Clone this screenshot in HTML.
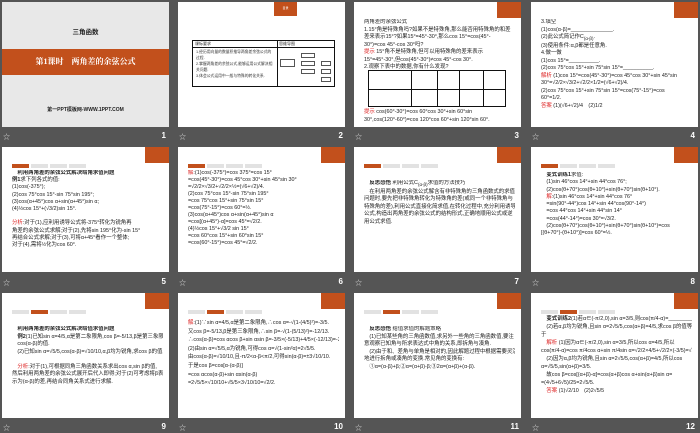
<!DOCTYPE html>
<html><head><meta charset="utf-8"><style>
*{margin:0;padding:0;box-sizing:border-box}
body{width:700px;height:431px;background:#555;position:relative;overflow:hidden;font-family:"Liberation Sans","Noto Sans CJK SC",sans-serif}
.s{position:absolute;width:167px;height:125px;background:#fff;overflow:hidden}
.tag{position:absolute;right:0;top:0;width:24px;height:16px;background:#c2501c;color:#fff;font-size:3px;line-height:4px;text-align:center;padding-top:4px}
.tabs{position:absolute;left:10px;top:17px;height:4px;width:80px}
.tabs i{float:left;width:17px;height:4px;background:#e2e2e2;margin-right:2px}
.tabs i.on{background:#c2501c}
.t{position:absolute;left:10px;right:6px;font-size:5.4px;line-height:8px;color:#222;white-space:nowrap;overflow:hidden}
.r{color:#d22}
.lab{position:absolute;color:#ddd;font-size:7px}
.num{position:absolute;color:#fff;font-size:8px;font-weight:bold;text-align:right;width:20px}
</style></head><body>

<div class="s" style="left:2px;top:2px;background:#e8e8e8">
 <div style="position:absolute;top:24px;width:100%;text-align:center;font-size:6.5px;font-weight:bold;color:#222">三角函数</div>
 <div style="position:absolute;top:47px;width:100%;height:26px;background:#c2501c;color:#fff;text-align:center;font-size:8px;font-weight:bold;line-height:26px;font-family:'Liberation Serif','Noto Serif CJK SC',serif">第1课时　两角差的余弦公式</div>
 <div style="position:absolute;top:104px;width:100%;text-align:center;font-size:5px;font-weight:bold;color:#222">第一PPT模板网-WWW.1PPT.COM</div>
</div>

<div class="s" style="left:178px;top:2px">
 <div class="tag" style="right:48px;width:23px;height:14px">目录</div>
 <div style="position:absolute;left:14px;top:38px;width:143px;height:47px;border:1.5px solid #111">
  <div style="position:absolute;left:0;top:6px;width:100%;border-top:1px solid #111"></div>
  <div style="position:absolute;left:84px;top:0;height:100%;border-left:1px solid #111"></div>
  <div style="position:absolute;left:2px;top:0;font-size:4px;color:#222">课标要求</div>
  <div style="position:absolute;left:86px;top:0;font-size:4px;color:#222">思维导图</div>
  <div style="position:absolute;left:3px;top:8px;width:78px;font-size:3.8px;line-height:6px;color:#333">1.经历用向量的数量积推导两角差余弦公式的过程.<br>2.掌握两角差的余弦公式,能够运用公式解决相关问题.<br>3.体会公式运用中一般与特殊的转化关系.</div>
  <div style="position:absolute;left:87px;top:18px;width:15px;height:8px;border:1px solid #555"></div>
  <div style="position:absolute;left:108px;top:12px;width:14px;height:5px;border:1px solid #555"></div>
  <div style="position:absolute;left:108px;top:20px;width:14px;height:5px;border:1px solid #555"></div>
  <div style="position:absolute;left:108px;top:28px;width:14px;height:5px;border:1px solid #555"></div>
  <div style="position:absolute;left:128px;top:20px;width:10px;height:5px;border:1px solid #555"></div>
  <div style="position:absolute;left:128px;top:28px;width:10px;height:5px;border:1px solid #555"></div>
  <div style="position:absolute;left:128px;top:36px;width:10px;height:5px;border:1px solid #555"></div>
 </div>
</div>

<div class="s" style="left:354px;top:2px">
 <div class="tag"></div>
 <div class="t" style="top:17px;line-height:7.5px">两角差的余弦公式<br>1.15°角是特殊角吗?如果不是特殊角,那么能否用特殊角的和差<br>差来表示15°?如果15°=45°-30°,那么cos 15°=cos(45°-<br>30°)=cos 45°-cos 30°吗?<br><span class="r">提示</span> 15°角不是特殊角,但可以用特殊角的差来表示<br>15°=45°-30°,但cos(45°-30°)≠cos 45°-cos 30°.<br>2.观察下表中的数据,你有什么发现?</div>
 <div style="position:absolute;left:14px;top:68px;width:138px;height:37px;border:1.5px solid #111;background:linear-gradient(#111,#111) 0 18px/100% 1px no-repeat,linear-gradient(#111,#111) 42px 0/1px 100% no-repeat,linear-gradient(#111,#111) 68px 0/1px 100% no-repeat,linear-gradient(#111,#111) 90px 0/1px 100% no-repeat,linear-gradient(#111,#111) 114px 0/1px 100% no-repeat"></div>
 <div class="t" style="top:106px"><span class="r">提示</span> cos(60°-30°)=cos 60°cos 30°+sin 60°sin<br>30°,cos(120°-60°)=cos 120°cos 60°+sin 120°sin 60°.</div>
</div>

<div class="s" style="left:531px;top:2px">
 <div class="tag"></div>
 <div class="t" style="top:17px;line-height:7.5px">3.填空<br>(1)cos(α-β)=______________.<br>(2)此公式简记作C<sub>(α-β)</sub>.<br>(3)使用条件:α,β都是任意角.<br>4.做一做<br>(1)cos 15°=__________.<br>(2)cos 75°cos 15°+sin 75°sin 15°=__________.<br><span class="r">解析</span> (1)cos 15°=cos(45°-30°)=cos 45°cos 30°+sin 45°sin<br>30°=√2/2×√3/2+√2/2×1/2=(√6+√2)/4.<br>(2)cos 75°cos 15°+sin 75°sin 15°=cos(75°-15°)=cos<br>60°=1/2.<br><span class="r">答案</span> (1)(√6+√2)/4　(2)1/2</div>
</div>

<div class="s" style="left:2px;top:147px">
 <div class="tag"></div>
 <div class="tabs"><i class="on"></i><i></i><i></i><i></i></div>
 <div class="t" style="top:23px;line-height:7.2px"><b>　利用两角差的余弦公式解决给角求值问题</b><br><b>例1</b>求下列各式的值:<br>(1)cos(-375°);<br>(2)cos 75°cos 15°-sin 75°sin 195°;<br>(3)cos(α+45°)cos α+sin(α+45°)sin α;<br>(4)½cos 15°+(√3/2)sin 15°.<br><br><span class="r">分析</span>:对于(1),应利用诱导公式将-375°转化为锐角再<br>角差的余弦公式求解;对于(2),先将sin 195°化为-sin 15°<br>再结合公式求解;对于(3),可将α+45°看作一个整体;<br>对于(4),需将½化为cos 60°.</div>
</div>

<div class="s" style="left:178px;top:147px">
 <div class="tag"></div>
 <div class="tabs"><i class="on"></i><i></i><i></i><i></i></div>
 <div class="t" style="top:23px;line-height:7px"><span class="r">解</span>:(1)cos(-375°)=cos 375°=cos 15°<br>=cos(45°-30°)=cos 45°cos 30°+sin 45°sin 30°<br>=√2/2×√3/2+√2/2×½=(√6+√2)/4.<br>(2)cos 75°cos 15°-sin 75°sin 195°<br>=cos 75°cos 15°+sin 75°sin 15°<br>=cos(75°-15°)=cos 60°=½.<br>(3)cos(α+45°)cos α+sin(α+45°)sin α<br>=cos[(α+45°)-α]=cos 45°=√2/2.<br>(4)½cos 15°+√3/2 sin 15°<br>=cos 60°cos 15°+sin 60°sin 15°<br>=cos(60°-15°)=cos 45°=√2/2.</div>
</div>

<div class="s" style="left:354px;top:147px">
 <div class="tag"></div>
 <div class="tabs"><i class="on"></i><i></i><i></i><i></i></div>
 <div class="t" style="top:33px;line-height:7.5px">　<b>反思感悟</b> 利用公式C<sub>(α-β)</sub>求值的方法技巧<br>　在利用两角差的余弦公式解含有非特殊角的三角函数式的求值<br>问题时,要先把非特殊角转化为特殊角的差(或同一个非特殊角与<br>特殊角的差),利用公式直接化简求值,在转化过程中,充分利用诱导<br>公式,构造出两角差的余弦公式的结构形式,正确地顺用公式或逆<br>用公式求值.</div>
</div>

<div class="s" style="left:531px;top:147px">
 <div class="tag"></div>
 <div class="tabs"><i class="on"></i><i></i><i></i><i></i></div>
 <div class="t" style="top:25px;line-height:7.3px">　<b>变式训练1</b>求值:<br>　(1)sin 46°cos 14°+sin 44°cos 76°;<br>　(2)cos(θ+70°)cos(θ+10°)+sin(θ+70°)sin(θ+10°).<br>　<span class="r">解</span>:(1)sin 46°cos 14°+sin 44°cos 76°<br>　=sin(90°-44°)cos 14°+sin 44°cos(90°-14°)<br>　=cos 44°cos 14°+sin 44°sin 14°<br>　=cos(44°-14°)=cos 30°=√3/2.<br>　(2)cos(θ+70°)cos(θ+10°)+sin(θ+70°)sin(θ+10°)=cos<br>[(θ+70°)-(θ+10°)]=cos 60°=½.</div>
</div>

<div class="s" style="left:2px;top:293px">
 <div class="tag"></div>
 <div class="tabs"><i></i><i class="on"></i><i></i><i></i></div>
 <div class="t" style="top:33px;line-height:7.5px"><b>　利用两角差的余弦公式解决给值求值问题</b><br><b>　例2</b>(1)已知sin α=4/5,α是第二象限角,cos β=-5/13,β是第三象限角,求<br>　cos(α-β)的值.<br>　(2)已知sin α=√5/5,cos(α-β)=√10/10,α,β均为锐角,求cos β的值.<br><br>　<span class="r">分析</span>:对于(1),可根据同角三角函数关系求出cos α,sin β的值,<br>然后利用两角差的余弦公式展开后代入即得;对于(2)可考虑将β表<br>示为(α-β)的差,再结合同角关系式进行求解.</div>
</div>

<div class="s" style="left:178px;top:293px">
 <div class="tag"></div>
 <div class="tabs"><i></i><i class="on"></i><i></i><i></i></div>
 <div class="t" style="top:26px;line-height:8.6px"><span class="r">解</span>:(1)∵sin α=4/5,α是第二象限角,∴cos α=-√(1-(4/5)²)=-3/5.<br>又cos β=-5/13,β是第三象限角,∴sin β=-√(1-(5/13)²)=-12/13.<br>∴cos(α-β)=cos αcos β+sin αsin β=-3/5×(-5/13)+4/5×(-12/13)=-33/65.<br>(2)由sin α=√5/5,α为锐角,可得cos α=√(1-sin²α)=2√5/5.<br>由cos(α-β)=√10/10,且-π/2&lt;α-β&lt;π/2,可得sin(α-β)=±3√10/10.<br>于是cos β=cos[α-(α-β)]<br>=cos αcos(α-β)+sin αsin(α-β)<br>=2√5/5×√10/10+√5/5×3√10/10=√2/2.</div>
</div>

<div class="s" style="left:354px;top:293px">
 <div class="tag"></div>
 <div class="tabs"><i></i><i class="on"></i><i></i><i></i></div>
 <div class="t" style="top:33px;line-height:7.5px">　<b>反思感悟</b> 给值求值的解题策略<br>　(1)已知某些角的三角函数值,求另外一些角的三角函数值,要注<br>意观察已知角与所求表达式中角的关系,即拆角与凑角.<br>　(2)由于和、差角与单角是相对的,因此解题过程中根据需要灵活<br>地进行拆角或凑角的变换.常见角的变换有:<br>　①α=(α-β)+β;②α=(α+β)-β;③2α=(α+β)+(α-β).</div>
</div>

<div class="s" style="left:531px;top:293px">
 <div class="tag"></div>
 <div class="tabs"><i></i><i class="on"></i><i></i><i></i></div>
 <div class="t" style="top:22px;line-height:8px">　<b>变式训练2</b>(1)若α∈(-π/2,0),sin α=3/5,则cos(π/4-α)=__________.<br>　(2)若α,β均为锐角,且sin α=2√5/5,cos(α+β)=4/5,求cos β的值等<br>于<br>　<span class="r">解析</span> (1)因为α∈(-π/2,0),sin α=3/5,所以cos α=4/5,所以<br>cos(π/4-α)=cos π/4cos α+sin π/4sin α=√2/2×4/5+√2/2×(-3/5)=√2/10.<br>　(2)因为α,β均为锐角,且sin α=2√5/5,cos(α+β)=4/5,所以cos<br>α=√5/5,sin(α+β)=3/5.<br>　故cos β=cos[(α+β)-α]=cos(α+β)cos α+sin(α+β)sin α=<br>=(4√5+6√5)/25=2√5/5.<br>　<span class="r">答案</span> (1)√2/10　(2)2√5/5</div>
</div>

<div class="lab" style="left:3px;top:132px">☆</div><div class="num" style="left:146px;top:131px">1</div>
<div class="lab" style="left:179px;top:132px">☆</div><div class="num" style="left:323px;top:131px">2</div>
<div class="lab" style="left:355px;top:132px">☆</div><div class="num" style="left:499px;top:131px">3</div>
<div class="lab" style="left:532px;top:132px">☆</div><div class="num" style="left:675px;top:131px">4</div>
<div class="lab" style="left:3px;top:278px">☆</div><div class="num" style="left:146px;top:277px">5</div>
<div class="lab" style="left:179px;top:278px">☆</div><div class="num" style="left:323px;top:277px">6</div>
<div class="lab" style="left:355px;top:278px">☆</div><div class="num" style="left:499px;top:277px">7</div>
<div class="lab" style="left:532px;top:278px">☆</div><div class="num" style="left:675px;top:277px">8</div>
<div class="lab" style="left:3px;top:423px">☆</div><div class="num" style="left:146px;top:422px">9</div>
<div class="lab" style="left:179px;top:423px">☆</div><div class="num" style="left:323px;top:422px">10</div>
<div class="lab" style="left:355px;top:423px">☆</div><div class="num" style="left:499px;top:422px">11</div>
<div class="lab" style="left:532px;top:423px">☆</div><div class="num" style="left:675px;top:422px">12</div>
</body></html>
